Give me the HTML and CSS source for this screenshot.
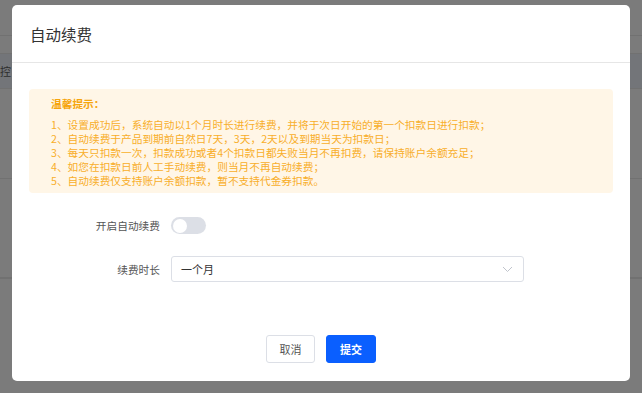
FILE: index.html
```html
<!DOCTYPE html>
<html lang="zh-CN">

<head>
    <meta charset="UTF-8">
    <meta name="viewport" content="width=device-width, initial-scale=1.0">
    <title>自动续费</title>
    <link rel="stylesheet" href="styles.css">
</head>

<body>
    <!-- page behind the mask -->
    <div class="page">
        <div class="row row-top"></div>
        <div class="row row-sub"></div>
        <div class="row row-head"><span class="cut">控</span></div>
        <div class="row row-big"></div>
        <div class="row row-big2"></div>
        <div class="row row-rest"></div>
    </div>

    <div class="mask">
        <div class="dialog">
            <div class="dialog-header">
                <span class="dialog-title">自动续费</span>
            </div>

            <div class="dialog-body">
                <div class="notice">
                    <p class="notice-title">温馨提示：</p>
                    <p>1、设置成功后，系统自动以1个月时长进行续费，并将于次日开始的第一个扣款日进行扣款；</p>
                    <p>2、自动续费于产品到期前自然日7天，3天，2天以及到期当天为扣款日；</p>
                    <p>3、每天只扣款一次，扣款成功或者4个扣款日都失败当月不再扣费，请保持账户余额充足；</p>
                    <p>4、如您在扣款日前人工手动续费，则当月不再自动续费；</p>
                    <p>5、自动续费仅支持账户余额扣款，暂不支持代金券扣款。</p>
                </div>

                <div class="form-row row-switch">
                    <label class="form-label">开启自动续费</label>
                    <span class="switch"><span class="knob"></span></span>
                </div>

                <div class="form-row row-select">
                    <label class="form-label">续费时长</label>
                    <div class="select">
                        <span>一个月</span>
                        <svg class="arrow" width="11" height="7" viewBox="0 0 11 7">
                            <path d="M1 1 L5.5 5.5 L10 1" fill="none" stroke="#c0c4cc" stroke-width="1"/>
                        </svg>
                    </div>
                </div>
            </div>

            <div class="dialog-footer">
                <button type="button" class="btn">取消</button>
                <button type="button" class="btn btn-primary">提交</button>
            </div>
        </div>
    </div>
</body>

</html>
```

FILE: styles.css
```css
body {
    margin: 0;
    background: #7b7b7b;
    font-family: "Noto Sans CJK SC", "Noto Sans", sans-serif;
    overflow: hidden;
}

p {
    margin: 0;
}

/* background page */
.page {
    height: 393px;
}

.row {
    border-bottom: 1px solid #717171;
    box-sizing: border-box;
}

.row-top {
    height: 36px;
}

.row-sub {
    height: 18px;
}

.row-head {
    height: 35px;
    background: #737579;
    display: flex;
    align-items: center;
    font-size: 11px;
    color: #2e2e2e;
}

.row-big {
    height: 90px;
}

.row-big2 {
    height: 99px;
}

/* dialog */
.mask {
    position: fixed;
    top: 0;
    left: 0;
    right: 0;
    bottom: 0;
}

.dialog {
    margin: 5px 0 0 12px;
    width: 618px;
    height: 376px;
    background: #fff;
    border-radius: 5px;
    display: flex;
    flex-direction: column;
}

.dialog-header {
    height: 57px;
    border-bottom: 1px solid #e6e6e6;
    display: flex;
    align-items: center;
    padding-left: 18px;
}

.dialog-title {
    font-size: 15.5px;
    color: #333;
}

.dialog-body {
    flex: 1;
    padding: 26px 17px 0 17px;
}

.notice {
    background: #fff6e7;
    border-radius: 4px;
    height: 104px;
    box-sizing: border-box;
    padding: 8px 0 0 22px;
    font-size: 10.7px;
    line-height: 14px;
    color: #f8ae2a;
}

.notice-title {
    font-weight: bold;
    color: #f6a50c;
    margin-bottom: 7px;
}

.form-row {
    display: flex;
    align-items: center;
}

.row-switch {
    margin-top: 24px;
}

.row-select {
    margin-top: 22px;
}

.form-label {
    width: 131px;
    text-align: right;
    font-size: 10.7px;
    color: #555;
    margin-right: 11px;
}

.switch {
    width: 35px;
    height: 17px;
    border-radius: 9px;
    background: #dcdfe6;
    display: flex;
    align-items: center;
    padding-left: 1.5px;
    box-sizing: border-box;
}

.knob {
    width: 14px;
    height: 14px;
    border-radius: 50%;
    background: #fff;
}

.select {
    width: 353px;
    height: 26px;
    box-sizing: border-box;
    border: 1px solid #dcdfe6;
    border-radius: 3px;
    display: flex;
    align-items: center;
    justify-content: space-between;
    padding: 0 10px 0 9px;
    font-size: 11px;
    color: #333;
}

.dialog-footer {
    display: flex;
    justify-content: center;
    gap: 11px;
    padding-bottom: 18px;
}

.btn {
    height: 28px;
    width: 49px;
    border: 1px solid #dcdfe6;
    border-radius: 3px;
    background: #fff;
    font-family: "Noto Sans CJK SC", sans-serif;
    font-size: 11px;
    color: #555;
    padding: 0;
}

.btn-primary {
    width: 50px;
    background: #0a5fff;
    border-color: #0a5fff;
    color: #fff;
    font-weight: bold;
}
```
